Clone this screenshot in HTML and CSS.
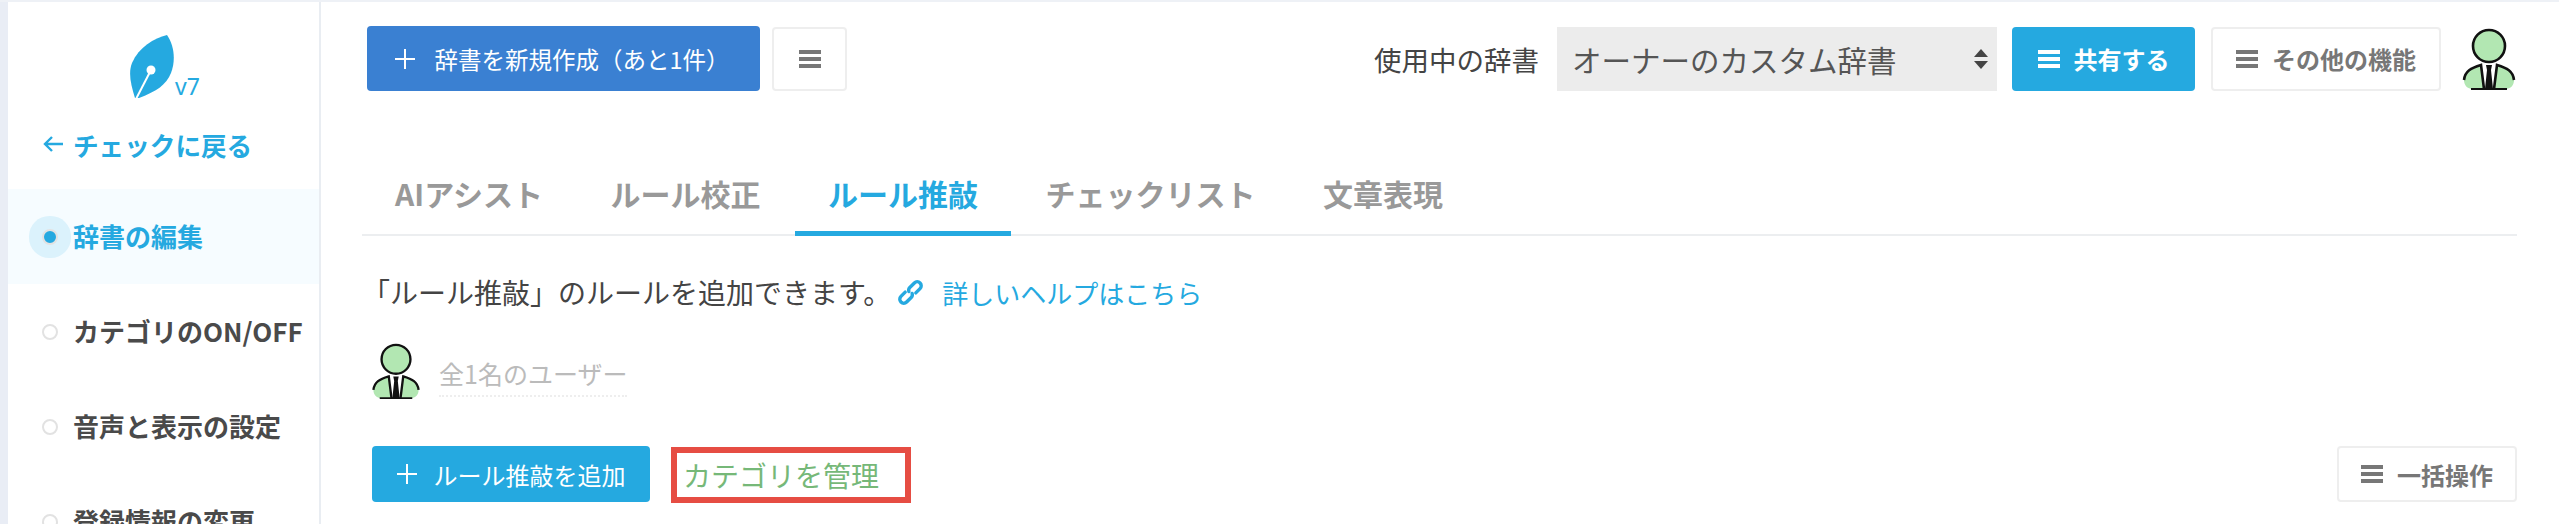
FILE: index.html
```html
<!DOCTYPE html>
<html lang="ja">

<head>
  <meta charset="UTF-8">
  <meta name="viewport" content="width=device-width, initial-scale=1.0">
  <title>辞書の編集</title>
  <link rel="stylesheet" href="styles.css">
</head>

<body>
  <svg class="defs" width="0" height="0">
    <symbol id="bars" viewBox="0 0 22 20">
      <rect y="1" width="22" height="4"></rect>
      <rect y="8" width="22" height="4"></rect>
      <rect y="15" width="22" height="4"></rect>
    </symbol>
    <symbol id="plus" viewBox="0 0 20 20">
      <path d="M10 0v20M0 10h20" fill="none" stroke="currentColor" stroke-width="2"></path>
    </symbol>
    <symbol id="avatar" viewBox="0 0 54 62">
      <circle cx="27" cy="18" r="16" fill="#b2e7b2" stroke="#111" stroke-width="2.6"></circle>
      <path d="M2 52C3 43 9 40 19 37L22 61H11C5 61 2 57 2 52Z" fill="#b2e7b2"></path>
      <path d="M52 52C51 43 45 40 35 37L32 61H43C49 61 52 57 52 52Z" fill="#b2e7b2"></path>
      <path d="M2 52C3 43 9 40 19 37L22 61M52 52C51 43 45 40 35 37L32 61" fill="none" stroke="#111" stroke-width="2.6"></path>
      <path d="M24 37H30L29 42L31 61H23L25 42Z" fill="#111"></path>
      <path d="M9 61H45" stroke="#111" stroke-width="2"></path>
    </symbol>
  </svg>

  <div class="app">
    <aside class="sidebar">
      <div class="logo">
        <svg class="logo-leaf" width="46" height="63" viewBox="0 0 46 63">
          <path d="M38 0C25 3 10 12 3 28C-1 38 2 50 6 63L10 63C28 56 37 50 42 38C47 25 45 10 38 0Z" fill="#25a9e0"></path>
          <path d="M7 64L22 35" stroke="#fff" stroke-width="2"></path>
          <circle cx="22" cy="35" r="4.5" fill="#fff"></circle>
        </svg>
        <span class="logo-ver">v7</span>
      </div>
      <a class="back-link">
        <svg width="20" height="16" viewBox="0 0 20 16">
          <path d="M20 8H2M9 1L2 8L9 15" fill="none" stroke="#25a9e0" stroke-width="2.4"></path>
        </svg>
        チェックに戻る
      </a>
      <nav class="nav">
        <div class="nav-item active"><span class="nav-dot"></span>辞書の編集</div>
        <div class="nav-item"><span class="nav-dot"></span>カテゴリのON/OFF</div>
        <div class="nav-item"><span class="nav-dot"></span>音声と表示の設定</div>
        <div class="nav-item"><span class="nav-dot"></span>登録情報の変更</div>
      </nav>
    </aside>

    <main class="main">
      <div class="toolbar">
        <button class="btn btn-new"><svg class="ico-plus"><use href="#plus"></use></svg>辞書を新規作成（あと1件）</button>
        <button class="btn btn-line btn-menu"><svg class="ico-bars"><use href="#bars"></use></svg></button>
        <div class="toolbar-right">
          <span class="dict-label">使用中の辞書</span>
          <div class="dict-select">
            オーナーのカスタム辞書
            <svg width="16" height="24" viewBox="0 0 16 24">
              <path d="M8 2L15 10H1ZM8 22L1 14H15Z" fill="#444"></path>
            </svg>
          </div>
          <button class="btn btn-share"><svg class="ico-bars"><use href="#bars"></use></svg>共有する</button>
          <button class="btn btn-line btn-more"><svg class="ico-bars"><use href="#bars"></use></svg>その他の機能</button>
          <svg class="avatar-top"><use href="#avatar"></use></svg>
        </div>
      </div>

      <div class="tabs">
        <div class="tab">AIアシスト</div>
        <div class="tab">ルール校正</div>
        <div class="tab active">ルール推敲</div>
        <div class="tab">チェックリスト</div>
        <div class="tab">文章表現</div>
      </div>

      <p class="desc">
        「ルール推敲」のルールを追加できます。
        <a class="help-link">
          <svg width="27" height="27" viewBox="0 0 27 27">
            <g transform="rotate(-45 13.5 13.5)" fill="none" stroke="#25a9e0" stroke-width="3.4" stroke-linecap="round">
              <path d="M10 9.5H4a4 4 0 0 0 0 8H10.5a4 4 0 0 0 3.5-2.2"></path>
              <path d="M17 17.5H23a4 4 0 0 0 0-8H16.5a4 4 0 0 0-3.5 2.2"></path>
            </g>
          </svg>
          詳しいヘルプはこちら
        </a>
      </p>

      <div class="users">
        <svg class="avatar-user"><use href="#avatar"></use></svg>
        <span class="users-count">全1名のユーザー</span>
      </div>

      <div class="actions">
        <button class="btn btn-add"><svg class="ico-plus"><use href="#plus"></use></svg>ルール推敲を追加</button>
        <a class="manage">カテゴリを管理</a>
        <button class="btn btn-line btn-bulk"><svg class="ico-bars"><use href="#bars"></use></svg>一括操作</button>
      </div>
    </main>
  </div>
</body>

</html>
```

FILE: styles.css
```css
html, body {
  margin: 0;
  height: 524px;
  overflow: hidden;
  background-color: #fff;
}

body {
  font-family: "Noto Sans CJK JP", "Noto Sans", sans-serif;
  color: #444;
  border-top: 2px solid #eef1f6;
  box-sizing: border-box;
}

.defs {
  position: absolute;
}

.app {
  display: flex;
  height: 522px;
}

/* sidebar */
.sidebar {
  width: 321px;
  flex: none;
  box-sizing: border-box;
  border-left: 8px solid #e9edf5;
  border-right: 2px solid #e9edf2;
}

.logo {
  display: flex;
  align-items: flex-end;
  padding: 33px 0 0 121px;
  height: 63px;
}

.logo-ver {
  font-family: "Noto Sans", sans-serif;
  color: #25a9e0;
  font-size: 23px;
  line-height: 23px;
}

.back-link {
  display: flex;
  align-items: center;
  gap: 10px;
  height: 40px;
  margin-top: 26px;
  padding-left: 35px;
  color: #25a9e0;
  font-size: 25.6px;
  font-weight: 700;
}

.nav {
  margin-top: 25px;
}

.nav-item {
  display: flex;
  align-items: center;
  box-sizing: border-box;
  height: 95px;
  padding-bottom: 3px;
  font-size: 26px;
  font-weight: 700;
  color: #4a4a4a;
}

.nav-item.active {
  background-color: #f6fcff;
  color: #25a9e0;
}

.nav-dot {
  width: 12px;
  height: 12px;
  margin: 3px 15px 0 34px;
  flex: none;
  border: 2px solid #e2e2e2;
  border-radius: 50%;
  background-color: #fff;
}

.active .nav-dot {
  background-color: #25a9e0;
  box-shadow: 0 0 0 13px #dbf2fc;
}

/* main */
.main {
  flex: 1;
  min-width: 0;
  padding: 24px 42px 0 41px;
}

.toolbar {
  display: flex;
  align-items: center;
  height: 65px;
  padding-left: 5px;
}

.toolbar-right {
  display: flex;
  align-items: center;
  margin-left: auto;
}

.btn {
  display: flex;
  align-items: center;
  justify-content: center;
  box-sizing: border-box;
  border: 0;
  border-radius: 4px;
  font-family: inherit;
  cursor: pointer;
}

.ico-plus {
  width: 20px;
  height: 20px;
  margin-right: 19px;
}

.ico-bars {
  width: 22px;
  height: 20px;
  margin-right: 14px;
  fill: currentColor;
}

.btn-new {
  width: 393px;
  height: 65px;
  padding-right: 8px;
  background-color: #3a80d2;
  color: #fff;
  font-size: 23.5px;
}

.btn-line {
  background-color: #fff;
  border: 2px solid #eee;
  color: #777;
  font-weight: 700;
}

.btn-menu {
  width: 75px;
  height: 64px;
  margin-left: 12px;
}

.btn-menu .ico-bars {
  margin-right: 0;
}

.dict-label {
  font-size: 27.5px;
  color: #444;
  margin-right: 18px;
}

.dict-select {
  display: flex;
  align-items: center;
  justify-content: space-between;
  box-sizing: border-box;
  width: 440px;
  height: 64px;
  padding: 0 8px 0 15px;
  background-color: #ececec;
  font-size: 29.5px;
  color: #555;
}

.btn-share {
  width: 183px;
  height: 64px;
  margin-left: 15px;
  background-color: #25a9e0;
  color: #fff;
  font-size: 24px;
  font-weight: 700;
}

.btn-more {
  width: 230px;
  height: 64px;
  margin-left: 16px;
  font-size: 24px;
}

.avatar-top {
  width: 56px;
  height: 62px;
  margin-left: 20px;
}

/* tabs */
.tabs {
  display: flex;
  margin-top: 65px;
  border-bottom: 2px solid #eceef0;
}

.tab {
  height: 80px;
  line-height: 74px;
  padding: 0 33px;
  margin-right: 1.5px;
  font-size: 30px;
  font-weight: 700;
  color: #999;
  margin-bottom: -2px;
  box-sizing: border-box;
}

.tab.active {
  color: #25a9e0;
  border-bottom: 5px solid #25a9e0;
}

.desc {
  display: flex;
  align-items: center;
  height: 40px;
  margin: 36px 0 0;
  font-size: 28px;
  color: #444;
}

.help-link {
  display: flex;
  align-items: center;
  gap: 18px;
  margin-left: 6px;
  color: #25a9e0;
  font-size: 26px;
}

.users {
  display: flex;
  align-items: center;
  height: 58px;
  margin-top: 30px;
  padding-left: 8px;
}

.avatar-user {
  width: 52px;
  height: 56px;
}

.users-count {
  margin: 7px 0 0 17px;
  padding-bottom: 2px;
  border-bottom: 2px dotted #eee;
  font-size: 25px;
  line-height: 40px;
  color: #bbb;
}

.actions {
  display: flex;
  align-items: flex-start;
  margin-top: 46px;
  padding-left: 10px;
}

.btn-add {
  width: 278px;
  height: 56px;
  background-color: #25a9e0;
  color: #fff;
  font-size: 24px;
}

.btn-add .ico-plus {
  margin-right: 17px;
}

.manage {
  display: flex;
  align-items: center;
  box-sizing: border-box;
  width: 240px;
  height: 56px;
  margin: 1px 0 0 21px;
  padding-left: 6px;
  border: 6px solid #e64d43;
  color: #76b878;
  font-size: 28px;
}

.btn-bulk {
  width: 180px;
  height: 56px;
  margin-left: auto;
  font-size: 24px;
}
```
